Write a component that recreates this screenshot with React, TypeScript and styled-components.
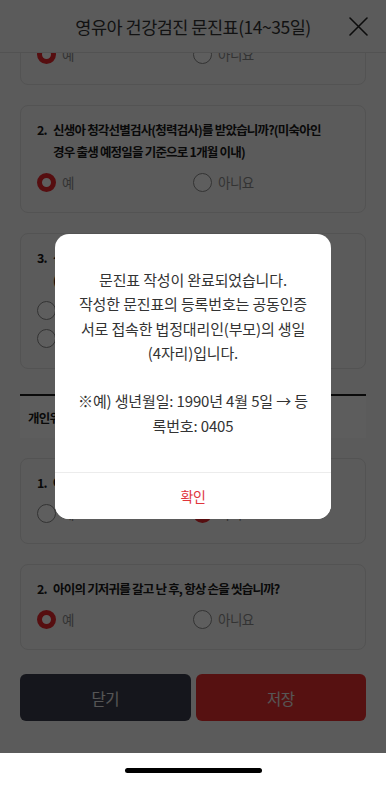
import React from 'react'
import styled, { createGlobalStyle } from 'styled-components'

const GlobalStyle = createGlobalStyle`
  * {
    box-sizing: border-box;
  }
  body {
    margin: 0;
    background: #ffffff;
    font-family: 'Noto Sans CJK KR', 'Noto Sans', sans-serif;
  }
`

type Question = {
  num: number
  text: string
  note?: string
  options: string[]
  answer: number
  vertical?: boolean
}

const PREV_QUESTIONS: Question[] = [
  {
    num: 1,
    text: '신생아 선천성대사이상검사를 받았습니까?',
    options: ['예', '아니요'],
    answer: 0,
  },
  {
    num: 2,
    text: '신생아 청각선별검사(청력검사)를 받았습니까?(미숙아인 경우 출생 예정일을 기준으로 1개월 이내)',
    options: ['예', '아니요'],
    answer: 0,
  },
  {
    num: 3,
    text: '신생아 청각선별검사 결과는 어떠합니까?',
    note: '(재검 포함)',
    options: ['통과', '재검'],
    answer: -1,
    vertical: true,
  },
]

const HYGIENE_QUESTIONS: Question[] = [
  {
    num: 1,
    text: '아이를 만지기 전에 항상 손을 씻습니까?',
    options: ['예', '아니요'],
    answer: 1,
  },
  {
    num: 2,
    text: '아이의 기저귀를 갈고 난 후, 항상 손을 씻습니까?',
    options: ['예', '아니요'],
    answer: 0,
  },
]

const MESSAGE = [
  '문진표 작성이 완료되었습니다.',
  '작성한 문진표의 등록번호는 공동인증',
  '서로 접속한 법정대리인(부모)의 생일',
  '(4자리)입니다.',
  '',
  '※예) 생년월일: 1990년 4월 5일 → 등',
  '록번호: 0405',
].join('\n')

// where the list was scrolled to when the dialog came up
const SCROLL_POSITION = 74

const QuestionCard: React.FC<{ q: Question }> = ({ q }) => (
  <Card>
    <QuestionText>
      <Num>{q.num}.</Num>
      <span>
        {q.text}
        {q.note && <Note>{q.note}</Note>}
      </span>
    </QuestionText>
    <Options $vertical={q.vertical}>
      {q.options.map((option, i) => (
        <Option key={option}>
          <Radio $checked={q.answer === i} />
          <OptionLabel>{option}</OptionLabel>
        </Option>
      ))}
    </Options>
  </Card>
)

export default function App() {
  const scrollRef = React.useRef<HTMLDivElement>(null)

  React.useLayoutEffect(() => {
    if (scrollRef.current) scrollRef.current.scrollTop = SCROLL_POSITION
  }, [])

  return (
    <Screen>
      <GlobalStyle />
      <AppArea>
        <Header>
          <span />
          <Title>영유아 건강검진 문진표(14~35일)</Title>
          <CloseButton aria-label="닫기">
            <svg width="19" height="19" viewBox="0 0 19 19" fill="none">
              <path
                d="M1 1L18 18M18 1L1 18"
                stroke="#222"
                strokeWidth="1.6"
                strokeLinecap="round"
              />
            </svg>
          </CloseButton>
        </Header>

        <Scroll ref={scrollRef}>
          <List>
            {PREV_QUESTIONS.map((q) => (
              <QuestionCard key={`prev-${q.num}`} q={q} />
            ))}
            <SectionTitle>개인위생</SectionTitle>
            {HYGIENE_QUESTIONS.map((q) => (
              <QuestionCard key={`hyg-${q.num}`} q={q} />
            ))}
          </List>
        </Scroll>

        <Footer>
          <FooterButton $variant="dark">닫기</FooterButton>
          <FooterButton $variant="red">저장</FooterButton>
        </Footer>

        <Dim>
          <Dialog>
            <Message>{MESSAGE}</Message>
            <ConfirmButton>확인</ConfirmButton>
          </Dialog>
        </Dim>
      </AppArea>
      <HomeArea>
        <HomeBar />
      </HomeArea>
    </Screen>
  )
}

const Screen = styled.div`
  display: flex;
  flex-direction: column;
  width: 386px;
  height: 787px;
  overflow: hidden;
`

const AppArea = styled.div`
  position: relative;
  display: flex;
  flex-direction: column;
  flex: 1;
  min-height: 0;
  background: #f6f6f6;
`

const Header = styled.header`
  display: grid;
  grid-template-columns: 1fr auto 1fr;
  align-items: center;
  height: 53px;
  padding: 0 14px;
  border-bottom: 1px solid #dedede;
  flex-shrink: 0;
`

const Title = styled.h1`
  margin: 0;
  font-size: 17.5px;
  font-weight: 400;
  letter-spacing: -0.5px;
  color: #333;
  white-space: nowrap;
`

const CloseButton = styled.button`
  justify-self: end;
  display: flex;
  align-items: center;
  justify-content: center;
  width: 28px;
  height: 28px;
  padding: 0;
  border: none;
  background: none;
`

const Scroll = styled.div`
  flex: 1;
  min-height: 0;
  overflow: hidden;
`

const List = styled.div`
  display: flex;
  flex-direction: column;
  gap: 20px;
  padding: 20px;
`

const Card = styled.div`
  padding: 13px 16px 20px;
  border: 1px solid #e0e0e0;
  border-radius: 8px;
  background: #f6f6f6;
`

const QuestionText = styled.p`
  display: flex;
  margin: 0;
  padding-right: 20px;
  font-size: 12.5px;
  font-weight: 700;
  line-height: 22px;
  letter-spacing: -0.8px;
  color: #1a1a1a;
  word-break: keep-all;
`

const Num = styled.span`
  flex-shrink: 0;
  width: 16px;
`

const Note = styled.span`
  display: block;
`

const Options = styled.div<{ $vertical?: boolean }>`
  display: grid;
  grid-template-columns: ${(p) => (p.$vertical ? '1fr' : '1fr 1fr')};
  row-gap: 9px;
  margin-top: 10px;
`

const Option = styled.label`
  display: flex;
  align-items: center;
  gap: 6px;
  height: 19px;
`

const Radio = styled.span<{ $checked: boolean }>`
  flex-shrink: 0;
  width: 19px;
  height: 19px;
  border-radius: 50%;
  background: #fff;
  border: ${(p) => (p.$checked ? '5px solid #e8262d' : '1.5px solid #8a8a8a')};
`

const OptionLabel = styled.span`
  font-size: 13.5px;
  line-height: 19px;
  letter-spacing: -0.5px;
  color: #8c8c8c;
`

const SectionTitle = styled.div`
  display: flex;
  align-items: center;
  height: 44px;
  margin-top: 5px;
  padding: 0 8px;
  border-top: 2px solid #1c1c1c;
  background: #fdfdfd;
  font-size: 12.5px;
  font-weight: 700;
  letter-spacing: -0.8px;
  color: #1a1a1a;
`

const Footer = styled.div`
  display: grid;
  grid-template-columns: 1fr 1fr;
  gap: 5px;
  padding: 12px 20px 32px;
  flex-shrink: 0;
`

const FooterButton = styled.button<{ $variant: 'dark' | 'red' }>`
  height: 47px;
  border: none;
  border-radius: 6px;
  background: ${(p) => (p.$variant === 'dark' ? '#3b3d4c' : '#ea3030')};
  color: #e8e8e8;
  font-family: inherit;
  font-size: 15.5px;
  letter-spacing: -0.6px;
`

const Dim = styled.div`
  position: absolute;
  inset: 0;
  display: flex;
  align-items: center;
  justify-content: center;
  background: rgba(0, 0, 0, 0.63);
`

const Dialog = styled.div`
  width: 276px;
  border-radius: 14px;
  background: #fff;
  overflow: hidden;
`

const Message = styled.p`
  margin: 0;
  padding: 34px 8px 34px;
  font-size: 15px;
  line-height: 24.3px;
  letter-spacing: -0.15px;
  color: #333;
  text-align: center;
  white-space: pre-line;
`

const ConfirmButton = styled.button`
  display: block;
  width: 100%;
  height: 47px;
  border: none;
  border-top: 1px solid #ececec;
  background: #fff;
  color: #e0353b;
  font-family: inherit;
  font-size: 14px;
  letter-spacing: -0.4px;
`

const HomeArea = styled.div`
  display: flex;
  align-items: center;
  justify-content: center;
  height: 34px;
  background: #fff;
  flex-shrink: 0;
`

const HomeBar = styled.div`
  width: 137px;
  height: 5px;
  border-radius: 3px;
  background: #000;
`
